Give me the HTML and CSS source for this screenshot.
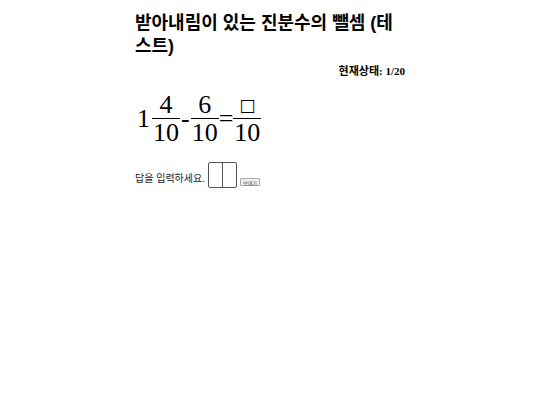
FILE: index.html
```html
<!DOCTYPE html>
<html lang="ko">
<head>
<meta charset="utf-8">
<link rel="stylesheet" href="styles.css">
</head>
<body>
<div class="wrap">
  <h1 class="title">받아내림이 있는 진분수의 뺄셈 (테스트)</h1>
  <div class="status">현재상태: 1/20</div>
  <div class="math">
    <span class="whole">1</span>
    <span class="frac"><span class="num">4</span><span class="den">10</span></span>
    <span class="op">-</span>
    <span class="frac"><span class="num">6</span><span class="den">10</span></span>
    <span class="op eq">=</span>
    <span class="frac"><span class="num box">□</span><span class="den">10</span></span>
  </div>
  <div class="answer">
    <span class="label">답을 입력하세요.</span>
    <span class="inputs"><span class="cell"></span><span class="cell"></span></span>
    <button class="send">보내기</button>
  </div>
</div>
</body>
</html>
```
FILE: styles.css
```css
body {
  margin: 8px;
  background: #fff;
  color: #000;
  font-family: "Liberation Sans", "Noto Sans CJK KR", sans-serif;
}
.wrap {
  width: 270px;
  margin: 0 auto;
}
.title {
  margin: 4px 0 0;
  font-size: 18px;
  line-height: 23px;
  font-weight: bold;
}
.status {
  margin-top: 6px;
  text-align: right;
  font-family: "Liberation Serif", "Noto Sans CJK KR", serif;
  font-weight: bold;
  font-size: 11px;
  line-height: 14px;
}
.math {
  display: flex;
  align-items: center;
  margin-top: 15px;
  font-family: "Liberation Serif", serif;
  font-size: 26px;
  line-height: 24px;
}
.whole {
  margin: 0 2px 0 2px;
}
.frac {
  display: inline-flex;
  flex-direction: column;
  align-items: center;
}
.num {
  padding: 0 1px 1px;
  border-bottom: 1px solid #000;
  align-self: stretch;
  text-align: center;
}
.den {
  padding: 2px 1px 0;
}
.box {
  font-family: "DejaVu Sans", sans-serif;
  font-size: 17px;
  line-height: 24px;
}
.op {
  margin: 0 1px;
}
.eq {
  margin: 0;
}
.answer {
  display: flex;
  align-items: flex-end;
  margin-top: 17px;
}
.label {
  font-size: 10px;
  line-height: 14px;
  color: #222;
  margin-bottom: 2px;
}
.inputs {
  display: flex;
  margin-left: 3px;
  border: 1px solid #555;
  border-radius: 2px;
}
.cell {
  width: 13px;
  height: 24px;
}
.cell + .cell {
  border-left: 1px solid #555;
}
.send {
  margin: 0 0 2px 3px;
  padding: 0 2px;
  font-family: "Noto Sans CJK KR", sans-serif;
  font-size: 5px;
  line-height: 7px;
  height: 8px;
  border: 1px solid #aaa;
  border-radius: 1px;
  background: #f0f0f0;
  color: #333;
}
```
